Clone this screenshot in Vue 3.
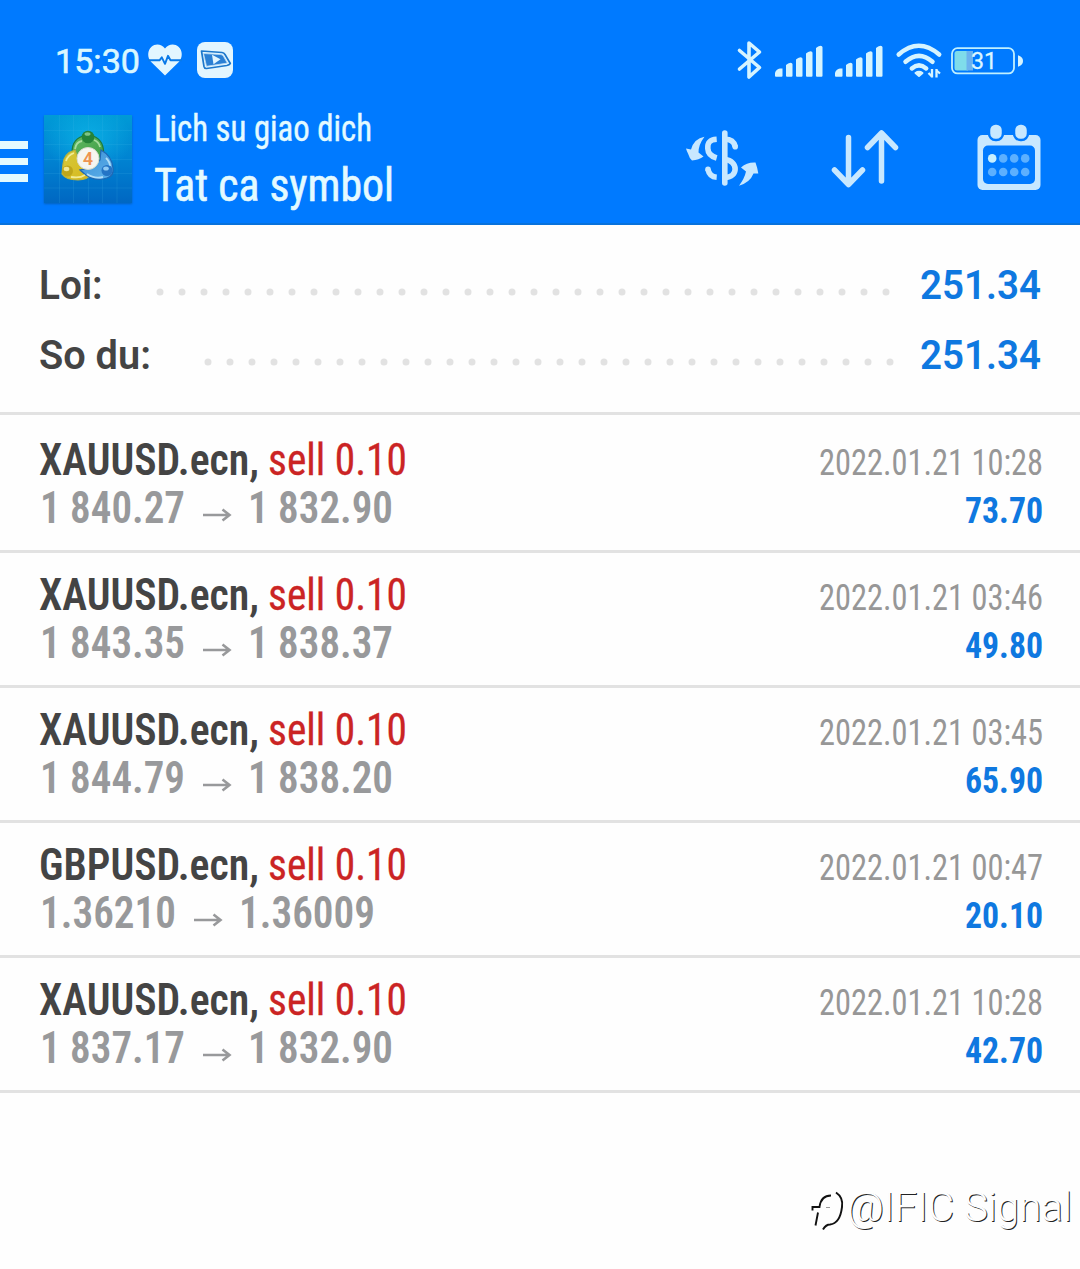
<script setup>
import { h } from 'vue'

// Single line of text set to a fixed measure, with the baseline at a known height
const FitText = (p) =>
  h('svg', { class: 'fit', width: p.w, height: p.lh, role: 'text' }, [
    h('text', { x: 0, y: p.base, textLength: p.w, lengthAdjust: 'spacingAndGlyphs', fill: 'currentColor' }, p.text),
  ])
FitText.props = ['text', 'w', 'lh', 'base']

const totals = [
  { label: 'Loi:', w: 63.5, gap: 53.7, dots: 33, value: '251.34' },
  { label: 'So du:', w: 112, gap: 53, dots: 31, value: '251.34' },
]

const deals = [
  { symbol: 'XAUUSD.ecn,', open: '1 840.27', close: '1 832.90', time: '2022.01.21 10:28', profit: '73.70' },
  { symbol: 'XAUUSD.ecn,', open: '1 843.35', close: '1 838.37', time: '2022.01.21 03:46', profit: '49.80' },
  { symbol: 'XAUUSD.ecn,', open: '1 844.79', close: '1 838.20', time: '2022.01.21 03:45', profit: '65.90' },
  { symbol: 'GBPUSD.ecn,', open: '1.36210', close: '1.36009', time: '2022.01.21 00:47', profit: '20.10' },
  { symbol: 'XAUUSD.ecn,', open: '1 837.17', close: '1 832.90', time: '2022.01.21 10:28', profit: '42.70' },
]
const priceWidth = (p) => (p.length === 8 ? 145 : 136)
</script>

<template>
  <div class="screen">
    <header>
      <div class="status">
        <FitText class="clock" text="15:30" :w="85" :lh="50" :base="43" />
        <svg class="heart" width="34" height="32" viewBox="0 0 34 32">
          <path d="M17 31.500 3.200 18C-1 13.500-.6 6.200 3.500 2.700 7.500-.7 13.500-.1 17 4.500 20.500-.1 26.500-.7 30.500 2.700c4.100 3.500 4.500 10.800.3 15.300z" fill="#e2f6ff" />
          <path d="M0 16.300h11.500l2.300-3 3.200 6.500 3-8 2.500 4.500H34" fill="none" stroke="#0879e8" stroke-width="1.900" stroke-linejoin="round" />
        </svg>
        <svg class="video" width="36" height="36" viewBox="0 0 36 36">
          <rect width="36" height="36" rx="8" fill="#e2f6ff" />
          <path d="M4.500 9 25 10.500q2 .3 3 2l5.300 9q-1 1.500-3.500 2L9.500 26.500q-2 .2-2.500-2z" fill="none" stroke="#1c78cc" stroke-width="1.700" stroke-linejoin="round" />
          <path d="M6.500 11.500 24 12.600q1.500.2 2.300 1.500l4 7-20.800 3.200z" fill="#2b80d4" />
          <path d="m15 12.800 8.500 4.400-7 5z" fill="#e2f6ff" />
          <path d="M6.500 11.500 24 12.600q1.500.2 2.300 1.500l4 7-20.800 3.200z" fill="none" stroke="#b9dcf6" stroke-width=".8" />
        </svg>
        <div class="spring"></div>
        <svg class="bt" width="26" height="40" viewBox="0 0 26 40">
          <path d="m2.500 10.500 20 17-10.500 9.500V3l10.500 9-20 17" fill="none" stroke="#d6f4ff" stroke-width="3.600" stroke-linejoin="round" stroke-linecap="round" />
        </svg>
        <svg v-for="n in 2" :key="n" class="signal" width="48" height="32" viewBox="0 0 48 32" fill="#d6f4ff">
          <path d="M0 31v-3q1-4 5-4.500h2.500V31q0 .7-1 .7H1Q0 31.700 0 31z" />
          <path d="M11 30.700V20q2-2 4.500-2.200 2 0 2 1.500v11.400q0 1-1 1H12q-1 0-1-1z" />
          <path d="M21 30.700V14.500q2-2 4.500-2.200 2 0 2 1.500v16.900q0 1-1 1H22q-1 0-1-1z" />
          <path d="M31 30.700V8.500q2-2 4.500-2.200 2 0 2 1.500v22.900q0 1-1 1H32q-1 0-1-1z" />
          <path d="M41 30.700V3q2-2 4.500-2.200 2 0 2 1.500v28.400q0 1-1 1H42q-1 0-1-1z" />
        </svg>
        <svg class="wifi" width="46" height="36" viewBox="0 0 46 36">
          <g fill="none" stroke="#d6f4ff" stroke-width="4.500" stroke-linecap="round">
            <path d="M2.700 11.500q20-17.500 40.500 0" />
            <path d="M9.500 18.800q13.500-12 27 0" />
            <path d="M15.800 25.400q7.200-6 14.400 0" />
          </g>
          <path d="M19.500 30q3.500-2.500 7 0L23 33z" fill="#d6f4ff" stroke="#d6f4ff" stroke-width="2" stroke-linejoin="round" />
          <g fill="none" stroke="#d6f4ff" stroke-width="2.300">
            <path d="M36 26v8.500M40.500 26v8.500" />
            <path d="m32.500 30 3.500 3.500M40.500 27.500l3.500 3" />
          </g>
        </svg>
        <svg class="battery" width="72" height="28" viewBox="0 0 72 28">
          <rect x="1" y="1.200" width="62" height="25.200" rx="5.500" fill="none" stroke="#c0f0ff" stroke-width="1.800" />
          <path d="M6 4h11v19.500H6Q3.500 23.500 3.500 21V6.500Q3.500 4 6 4z" fill="#7fdcea" />
          <path d="M15.500 4H22v19.500h-6.500z" fill="#6cb2ee" />
          <path d="M67 8.300q5 1.500 5 5.700t-5 5.700z" fill="#d6f4ff" />
          <text x="20" y="22" textLength="26" lengthAdjust="spacingAndGlyphs" font-size="23" font-weight="400" stroke="#dcf6ff" stroke-width=".3" fill="#dcf6ff">31</text>
        </svg>
      </div>

      <div class="toolbar">
        <div class="menu"><i></i><i></i><i></i></div>
        <svg class="logo" width="88" height="88" viewBox="0 0 88 88">
          <defs>
            <linearGradient id="sky" x1="0" y1="0" x2="0" y2="1">
              <stop offset="0" stop-color="#009ad6" /><stop offset=".5" stop-color="#0083d2" /><stop offset="1" stop-color="#0067c2" />
            </linearGradient>
            <radialGradient id="glow"><stop offset="0" stop-color="#12c2ee" stop-opacity=".6" /><stop offset="1" stop-color="#12c2ee" stop-opacity="0" /></radialGradient>
            <linearGradient id="green" x1="0" y1="0" x2="1" y2="1"><stop offset="0" stop-color="#5fb860" /><stop offset="1" stop-color="#3f9c45" /></linearGradient>
            <linearGradient id="gold" x1="0" y1="0" x2="1" y2="1"><stop offset="0" stop-color="#d3c93c" /><stop offset="1" stop-color="#d9b81c" /></linearGradient>
            <linearGradient id="blue" x1="0" y1="0" x2="1" y2="1"><stop offset="0" stop-color="#3b8fd6" /><stop offset="1" stop-color="#5db0ea" /></linearGradient>
            <clipPath id="tile"><rect width="88" height="88" /></clipPath>
          </defs>
          <g clip-path="url(#tile)">
            <rect width="88" height="88" fill="url(#sky)" />
            <ellipse cx="44" cy="24" rx="44" ry="34" fill="url(#glow)" />
            <path d="M15.500 0v88M29.500 0v88M44.500 0v88M58.500 0v88M73 0v88M0 15.500h88M0 29.500h88M0 44.500h88M0 58.500h88M0 73h88" stroke="#49bfee" stroke-opacity=".15" />
          </g>
          <g stroke-width="1.200">
            <path d="M28.500 42Q26 25 39 21h10q12 4 10.500 21l-3 6H31z" fill="url(#green)" stroke="#1d7a3c" />
            <path d="M31 35q-11 3-12 14l-1 10q4 6 16 6 10-.5 12-5l-10-11z" fill="url(#gold)" stroke="#b9b23c" />
            <path d="M57 35q11 6 12 18 1 8-6 10-14 5-27-8l11-2 9-8z" fill="url(#blue)" stroke="#1f67b4" />
          </g>
          <g fill="none" stroke-width="1.800" stroke-opacity=".85">
            <path d="M31 34q1-7 7-8M50 25q5 2 6 7" stroke="#b7e4ac" />
            <path d="M22 46q2-6 8-8M27 62q9 1.500 14-2" stroke="#f6f3a8" />
            <path d="M62 43q4 4 4 8M43 59q7 5 16 3" stroke="#bfe6fc" />
          </g>
          <circle cx="44" cy="22" r="6.300" fill="#258338" /><ellipse cx="43.500" cy="19" rx="3" ry="1.800" fill="#7fc484" />
          <circle cx="23.500" cy="56" r="5.500" fill="#bfa61a" /><ellipse cx="22.500" cy="54" rx="2.800" ry="2.200" fill="#efe897" />
          <circle cx="63" cy="55.500" r="5.500" fill="#2474c6" /><ellipse cx="62" cy="53.500" rx="2.800" ry="2" fill="#8fcaf4" />
          <circle cx="44" cy="43.500" r="11" fill="#f6f5f0" stroke="#d4dccc" />
          <text class="four" x="38.700" y="50" font-size="18.500" textLength="10.500" lengthAdjust="spacingAndGlyphs" fill="#ee9450">4</text>
        </svg>
        <div class="titles">
          <FitText class="subtitle" text="Lich su giao dich" :w="218" :lh="48" :base="33" />
          <FitText class="title" text="Tat ca symbol" :w="240" :lh="56" :base="44.500" />
        </div>
        <div class="spring"></div>
        <svg class="money" width="72" height="56" viewBox="0 0 72 56">
          <g fill="none" stroke="#c8e8ff" stroke-width="5.600">
            <path d="M38.800 3v50" stroke-linecap="round" />
            <path d="M30.700 9.300C23 9.800 21.500 13 21.800 18.500c.2 4.500 3.500 8 8.900 9.500" />
            <path d="M30.700 47.300Q23.500 46.800 22 39.500M39 9.300q8.500 0 10.200 7.200M39 29.500c13.500 1.500 13.500 17.500 0 18" stroke-linecap="butt" />
          </g>
          <g fill="#c8e8ff"><circle cx="22" cy="39.200" r="2.800" /><circle cx="49.200" cy="16.700" r="2.800" /></g>
          <path d="M18.500 6.700Q8 8.500 5 19.500L0 18.500q.5 2 2 5 1.500 5 4 7 7-.5 11.500-4L12.500 22.500q0-8 6-15.800z" fill="#c8e8ff" />
          <path d="M53 55.700Q64 52.500 67.500 43.500h4.800Q71.500 38 69.500 32.500 61 32 55 37.500l5 4q-1.500 7-7 14.200z" fill="#c8e8ff" />
        </svg>
        <svg class="sort" width="68" height="60" viewBox="0 0 68 60" fill="none" stroke="#c8e8ff" stroke-width="5.500" stroke-linecap="round" stroke-linejoin="round">
          <path d="M17.500 8.500V55M3.500 41 17.500 55.500 31.500 41M50.500 52V4.500M36.500 18.500 50.500 4 64.500 18.500" />
        </svg>
        <svg class="calendar" width="64" height="66" viewBox="0 0 64 66">
          <rect x=".5" y="11" width="63" height="55" rx="5" fill="#c8e8ff" />
          <rect x="6" y="21.500" width="52" height="38.500" rx="5" fill="#007aff" />
          <g fill="#c8e8ff" stroke="#007aff" stroke-width="2.500">
            <rect x="12" y="-.5" width="14" height="16.500" rx="6.500" />
            <rect x="37" y="-.5" width="14" height="16.500" rx="6.500" />
          </g>
          <template v-for="r in 2" :key="r">
            <circle v-for="c in 4" :key="c" :cx="4.200 + c * 11" :cy="20.800 + r * 13.600" r="4.300" :fill="r === 1 && c === 1 ? '#c8f0ff' : '#5cb0ff'" />
          </template>
        </svg>
      </div>
    </header>

    <section class="totals">
      <div v-for="t in totals" :key="t.label" class="total">
        <FitText class="label" :text="t.label" :w="t.w" :lh="70" :base="43.500" />
        <svg class="dots" :style="{ marginLeft: t.gap + 'px' }" :width="t.dots * 22 + 8" height="8">
          <path :d="`M4 4h${t.dots * 22 + 0.1}`" stroke="#e2e2e2" stroke-width="7" stroke-linecap="round" stroke-dasharray="0 22" />
        </svg>
        <div class="spring"></div>
        <FitText class="sum" :text="t.value" :w="121" :lh="70" :base="43.500" />
      </div>
    </section>

    <section class="deals">
      <article v-for="(d, i) in deals" :key="i" class="deal">
        <div class="info">
          <div class="line">
            <FitText class="symbol" :text="d.symbol" :w="220" :lh="48" :base="37" />
            <FitText class="side" text="sell 0.10" :w="139" :lh="48" :base="37" />
          </div>
          <div class="line prices">
            <FitText :text="d.open" :w="priceWidth(d.open)" :lh="48" :base="36.500" />
            <svg class="arrow" width="28" height="13" viewBox="0 0 28 13">
              <path d="M0 7h26M19.500 1.500l7 5.500-7 5.500" fill="none" stroke="currentColor" stroke-width="2.600" />
            </svg>
            <FitText :text="d.close" :w="priceWidth(d.close)" :lh="48" :base="36.500" />
          </div>
        </div>
        <div class="result">
          <FitText class="time" :text="d.time" :w="224" :lh="48" :base="37" />
          <FitText class="profit" :text="d.profit" :w="78" :lh="48" :base="37" />
        </div>
      </article>
    </section>

    <footer>
      <svg class="mark" width="34" height="42" viewBox="0 0 34 42" fill="none" stroke="#111">
        <path d="M25 2.500q7.500 5 6 14.500Q29 33.500 19 34.500q-4 0-7 5" stroke-width="2" />
        <path d="M20 5.500Q10 5.500 8.500 17H1.500v3.500M4.500 35.500l2.500-13" stroke-width="1.900" />
        <path d="M15 17.500h4" stroke="#999" />
      </svg>
      <FitText class="handle" text="@IFIC Signal" :w="225" :lh="52" :base="41.500" />
    </footer>
  </div>
</template>

<style>
body { margin: 0; background: #fefefe; }
</style>

<style scoped>
.screen { width: 1080px; height: 1269px; overflow: hidden; display: flex; flex-direction: column; background: #fefefe; font-family: "Roboto Condensed", Roboto, sans-serif; font-stretch: 75%; }
svg { display: block; flex: none; overflow: visible; }
.spring { flex: 1; }
header { height: 225px; box-sizing: border-box; background: #007aff; border-bottom: 2px solid #0872dc; color: #e4faff; flex: none; }
.status { height: 100px; display: flex; align-items: flex-start; padding: 0 57px 0 55px; font-family: Roboto, sans-serif; font-stretch: 100%; }
.clock { margin-top: 30px; font-size: 33px; font-weight: 400; color: #d9f7ff; stroke: currentColor; stroke-width: .6px; }
.heart { margin: 44px 0 0 8px; }
.video { margin: 42px 0 0 15px; }
.bt { margin-top: 40px; }
.signal { margin: 45px 0 0 12px; }
.wifi { margin: 43px 0 0 13px; }
.battery { margin: 47px 0 0 9px; }
.toolbar { height: 123px; display: flex; align-items: flex-start; padding-right: 39px; }
.menu { width: 28px; margin: 41px 16px 0 0; display: flex; flex-direction: column; gap: 9px; }
.menu i { height: 7.500px; background: #e4faff; }
.logo { margin-top: 15px; box-shadow: 0 1px 2px #0462bb; }
.titles { margin: 8px 0 0 22px; display: flex; flex-direction: column; }
.subtitle { font-size: 36.500px; stroke: currentColor; stroke-width: .4px; }
.title { font-size: 46.500px; stroke: currentColor; stroke-width: .6px; }
.money { margin-top: 29.500px; }
.sort { margin: 28.500px 0 0 73px; }
.calendar { margin: 24px 0 0 78px; }
.totals { height: 190px; box-sizing: border-box; padding: 30px 39px 0 39px; border-bottom: 3px solid #e2e2e2; flex: none; }
.total { height: 70px; display: flex; align-items: flex-start; font-size: 40px; font-weight: 600; font-family: Roboto, sans-serif; font-stretch: 100%; }
.label { color: #444; }
.sum { color: #0f78e0; }
.dots { margin-top: 32.500px; }
.deal { height: 135px; box-sizing: border-box; padding: 20px 37px 0 39px; border-bottom: 3px solid #e2e2e2; display: flex; justify-content: space-between; }
.deal:first-child { height: 138px; padding-top: 23px; }
.line { display: flex; align-items: flex-start; font-size: 43.500px; }
.symbol { color: #444; font-weight: 650; }
.side { color: #cb2424; margin-left: 9px; stroke: currentColor; stroke-width: .3px; }
.prices { color: #98999b; font-weight: 650; padding-left: .5px; }
.arrow { margin: 22px 17px 0 18.500px; }
.result { display: flex; flex-direction: column; align-items: flex-end; font-size: 36px; }
.time { color: #979797; }
.profit { color: #0f78e0; font-weight: 700; }
.four { font-family: Roboto, sans-serif; font-weight: 500; }
footer { display: flex; justify-content: flex-end; padding: 86px 8px 0 0; }
.mark { margin: 11px 2px 0 0; }
.handle { color: #fefefe; font-family: Roboto, sans-serif; font-stretch: 100%; font-size: 41px; font-weight: 300; text-shadow: 1px 1px 0 #222; }
</style>
